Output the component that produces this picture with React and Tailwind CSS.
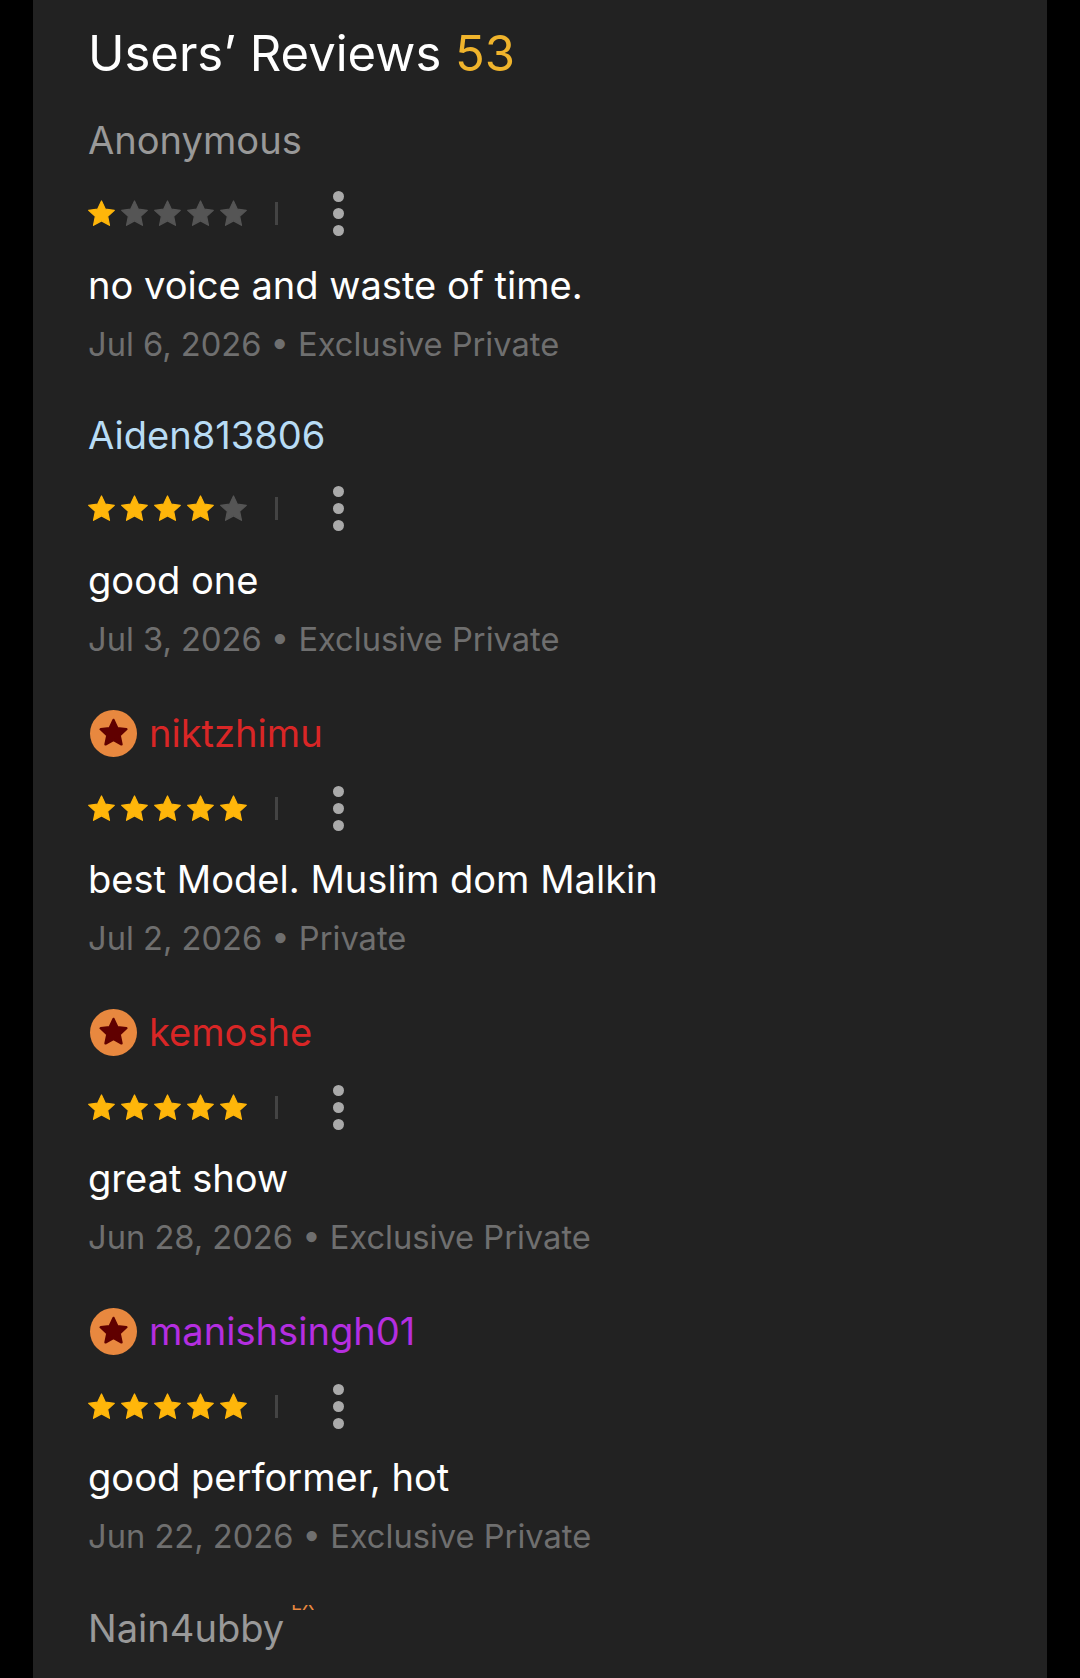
const reviews = [
  { name: "Anonymous", color: "text-[#999999]", stars: 1, text: "no voice and waste of time.", meta: "Jul 6, 2026 • Exclusive Private" },
  { name: "Aiden813806", color: "text-[#b8dcf5]", stars: 4, text: "good one", meta: "Jul 3, 2026 • Exclusive Private" },
  { name: "niktzhimu", color: "text-[#d92626]", stars: 5, badge: true, text: "best Model. Muslim dom Malkin", meta: "Jul 2, 2026 • Private" },
  { name: "kemoshe", color: "text-[#d92626]", stars: 5, badge: true, text: "great show", meta: "Jun 28, 2026 • Exclusive Private" },
  { name: "manishsingh01", color: "text-[#b52ee0]", stars: 5, badge: true, text: "good performer, hot", meta: "Jun 22, 2026 • Exclusive Private" },
];

const STAR = "12,1.6 15.2,8.4 22.6,9.3 17.1,14.4 18.6,21.8 12,18.1 5.4,21.8 6.9,14.4 1.4,9.3 8.8,8.4";

function Star({ on }) {
  return (
    <svg viewBox="0 0 24 24" className="w-[29px] h-[29px] shrink-0">
      <polygon points={STAR} fill={on ? "#ffb60a" : "#555555"} stroke={on ? "#ffb60a" : "#555555"} strokeWidth="1" strokeLinejoin="round" />
    </svg>
  );
}

function Badge() {
  return (
    <span className="w-[47px] h-[47px] rounded-full bg-[#e8883f] flex items-center justify-center shrink-0">
      <svg viewBox="0 0 24 24" className="w-[29px] h-[29px] -mt-[2px]">
        <polygon points={STAR} fill="#600000" stroke="#600000" strokeWidth="2" strokeLinejoin="round" />
      </svg>
    </span>
  );
}

function Review({ r }) {
  return (
    <div className={`flex flex-col ${r.badge ? "mt-[1px]" : ""}`}>
      <div className={`flex items-center gap-[12px] ${r.badge ? "h-[47px] pl-[2px]" : "h-[43px]"}`}>
        {r.badge && <Badge />}
        <span className={`text-[38.1px] leading-[43px] ${r.color}`}>{r.name}</span>
      </div>
      <div className="flex items-center h-[46px] mt-[28px]">
        <div className="flex gap-[4px] w-[175px] -ml-px">
          {[1, 2, 3, 4, 5].map((i) => (
            <Star key={i} on={i <= r.stars} />
          ))}
        </div>
        <div className="w-[3px] h-[23px] bg-[#444444] ml-[13px]" />
        <div className="flex flex-col gap-[6px] ml-[55px]">
          <span className="w-[11px] h-[11px] rounded-full bg-[#aaaaaa]" />
          <span className="w-[11px] h-[11px] rounded-full bg-[#aaaaaa]" />
          <span className="w-[11px] h-[11px] rounded-full bg-[#aaaaaa]" />
        </div>
      </div>
      <div className={`${r.badge ? "mt-[27px]" : "mt-[28px]"} text-[38.1px] leading-[43px] text-white`}>{r.text}</div>
      <div className="mt-[18px] text-[32.65px] leading-[39px] text-[#6f6f6f]">{r.meta}</div>
    </div>
  );
}

export default function App() {
  return (
    <div className="w-[1080px] h-[1678px] bg-black overflow-hidden font-['Inter',sans-serif]">
      <div className="w-[1014px] h-full ml-[33px] bg-[#222222] pl-[55px] pt-[25px]">
        <h2 className="text-[49px] leading-[58px] font-normal text-white">
          Users’ Reviews <span className="text-[#f0b42c]">53</span>
        </h2>
        <div className="mt-[36px] flex flex-col gap-[50px]">
          {reviews.map((r) => (
            <Review key={r.name} r={r} />
          ))}
          <div className="flex items-start h-[43px] mt-[1px]">
            <span className="text-[38.1px] leading-[43px] text-[#999999]">Nain4ubby</span>
            <span className="h-[8px] -mt-[2px] ml-[7px] overflow-hidden flex items-end text-[#e8883f] text-[18px] leading-[18px]">
              <span className="block">EX</span>
            </span>
          </div>
        </div>
      </div>
    </div>
  );
}
